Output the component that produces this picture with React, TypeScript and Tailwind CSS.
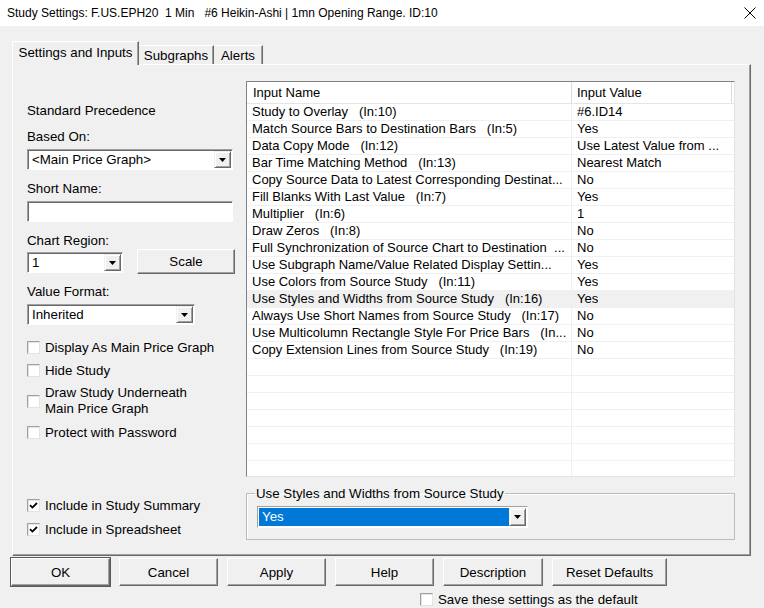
import React from "react";

const rows: [string, string][] = [
  ["Study to Overlay   (In:10)", "#6.ID14"],
  ["Match Source Bars to Destination Bars   (In:5)", "Yes"],
  ["Data Copy Mode   (In:12)", "Use Latest Value from ..."],
  ["Bar Time Matching Method   (In:13)", "Nearest Match"],
  ["Copy Source Data to Latest Corresponding Destinat...", "No"],
  ["Fill Blanks With Last Value   (In:7)", "Yes"],
  ["Multiplier   (In:6)", "1"],
  ["Draw Zeros   (In:8)", "No"],
  ["Full Synchronization of Source Chart to Destination  ...", "No"],
  ["Use Subgraph Name/Value Related Display Settin...", "Yes"],
  ["Use Colors from Source Study   (In:11)", "Yes"],
  ["Use Styles and Widths from Source Study   (In:16)", "Yes"],
  ["Always Use Short Names from Source Study   (In:17)", "No"],
  ["Use Multicolumn Rectangle Style For Price Bars   (In...", "No"],
  ["Copy Extension Lines from Source Study   (In:19)", "No"],
];

function Check({ checked }: { checked?: boolean }) {
  return (
    <span className="w-[13px] h-[13px] shrink-0 bg-white border border-t-[#a0a0a0] border-l-[#a0a0a0] border-r-[#e3e3e3] border-b-[#e3e3e3] shadow-[inset_1px_1px_0_#e3e3e3] flex items-center justify-center">
      {checked && (
        <svg width="9" height="9" viewBox="0 0 9 9">
          <path d="M1 4.2 L3.4 6.6 L8 2" stroke="#000" strokeWidth="1.8" fill="none" />
        </svg>
      )}
    </span>
  );
}

function Arrow() {
  return (
    <svg width="7" height="4" viewBox="0 0 7 4">
      <path d="M0 0 H7 L3.5 4 Z" fill="#000" />
    </svg>
  );
}

function DropBtn() {
  return (
    <div className="w-[17px] h-[17px] my-[1px] mr-[1px] bg-[#f0f0f0] border border-t-[#f0f0f0] border-l-[#f0f0f0] border-r-[#696969] border-b-[#696969] shadow-[inset_1px_1px_0_#ffffff,inset_-1px_-1px_0_#a0a0a0] flex items-center justify-center">
      <Arrow />
    </div>
  );
}

function Select({ value, className }: { value: string; className: string }) {
  return (
    <div
      className={
        "h-[21px] bg-white flex border border-t-[#a0a0a0] border-l-[#a0a0a0] border-r-[#ffffff] border-b-[#ffffff] shadow-[inset_1px_1px_0_#696969] " +
        className
      }
    >
      <div className="flex-1 pl-[4px] pt-[1px] leading-[17px] whitespace-pre">{value}</div>
      <DropBtn />
    </div>
  );
}

function Btn({ label, w, h, def }: { label: string; w: string; h?: string; def?: boolean }) {
  return (
    <div
      className={
        "flex items-center justify-center bg-[#f0f0f0] border border-t-[#ffffff] border-l-[#ffffff] border-r-[#696969] border-b-[#696969] shadow-[inset_-1px_-1px_0_#a0a0a0] " +
        w +
        " " +
        (h ?? "h-[28px]") +
        (def ? " outline outline-1 outline-[#5a5a5a]" : "")
      }
    >
      {label}
    </div>
  );
}

export default function App() {
  const empty = 7;
  return (
    <div className="w-[764px] h-[608px] bg-[#f0f0f0] flex flex-col text-black text-[13.3px] leading-[15px] font-['Liberation_Sans',Arial,sans-serif] overflow-hidden">
      {/* title bar */}
      <div className="h-[26px] shrink-0 bg-white flex items-center pl-[7px] pr-[8px] text-[12px]">
        <span className="flex-1 whitespace-pre">
          Study Settings: F.US.EPH20  1 Min   #6 Heikin-Ashi | 1mn Opening Range. ID:10
        </span>
        <svg width="12" height="12" viewBox="0 0 12 12">
          <path d="M0.5 0.5 L11.5 11.5 M11.5 0.5 L0.5 11.5" stroke="#000" strokeWidth="1" />
        </svg>
      </div>

      {/* tabs */}
      <div className="mt-[15px] ml-[12px] flex items-end h-[23px] shrink-0">
        <div className="relative z-10 w-[127px] h-[24px] -mb-[1px] bg-[#f0f0f0] border-t border-l border-r border-t-white border-l-white border-r-[#696969] shadow-[inset_-1px_0_0_#a0a0a0] flex items-center justify-center pb-[2px]">
          Settings and Inputs
        </div>
        <div className="w-[75px] h-[19px] border-t border-r border-t-white border-r-[#696969] shadow-[inset_-1px_0_0_#a0a0a0] flex items-center justify-center">
          Subgraphs
        </div>
        <div className="w-[49px] h-[19px] border-t border-r border-t-white border-r-[#696969] shadow-[inset_-1px_0_0_#a0a0a0] flex items-center justify-center">
          Alerts
        </div>
      </div>

      {/* panel */}
      <div className="ml-[12px] w-[739px] h-[492px] shrink-0 flex border border-t-white border-l-white border-r-[#696969] border-b-[#696969] shadow-[inset_-1px_-1px_0_#a0a0a0]">
        {/* left column */}
        <div className="w-[210px] ml-[14px] flex flex-col">
          <div className="mt-[38px]">Standard Precedence</div>
          <div className="mt-[11px]">Based On:</div>
          <Select value="<Main Price Graph>" className="mt-[5px] w-[206px]" />
          <div className="mt-[11px]">Short Name:</div>
          <div className="mt-[5px] w-[206px] h-[21px] bg-white border border-t-[#a0a0a0] border-l-[#a0a0a0] border-r-white border-b-white shadow-[inset_1px_1px_0_#696969]" />
          <div className="mt-[11px]">Chart Region:</div>
          <div className="mt-[1px] flex items-start">
            <Select value="1" className="mt-[3px] w-[96px]" />
            <div className="ml-[14px]">
              <Btn label="Scale" w="w-[98px]" h="h-[25px]" />
            </div>
          </div>
          <div className="mt-[10px]">Value Format:</div>
          <Select value="Inherited" className="mt-[5px] w-[168px]" />
          <div className="mt-[15px] flex items-center gap-[5px]">
            <Check />
            <span>Display As Main Price Graph</span>
          </div>
          <div className="mt-[8px] flex items-center gap-[5px]">
            <Check />
            <span>Hide Study</span>
          </div>
          <div className="mt-[7px] flex items-center gap-[5px]">
            <Check />
            <span className="leading-[16px]">
              Draw Study Underneath
              <br />
              Main Price Graph
            </span>
          </div>
          <div className="mt-[8px] flex items-center gap-[5px]">
            <Check />
            <span>Protect with Password</span>
          </div>
          <div className="mt-[58px] flex items-center gap-[5px]">
            <Check checked />
            <span>Include in Study Summary</span>
          </div>
          <div className="mt-[9px] flex items-center gap-[5px]">
            <Check checked />
            <span>Include in Spreadsheet</span>
          </div>
        </div>

        {/* right column */}
        <div className="ml-[9px] w-[489px] flex flex-col">
          <div className="mt-[16px] h-[396px] bg-white border border-t-[#828282] border-l-[#828282] border-r-[#e3e3e3] border-b-[#e3e3e3] flex flex-col overflow-hidden text-[13px]">
            <div className="h-[22px] shrink-0 flex border-b border-[#e5e5e5]">
              <div className="w-[325px] pl-[6px] border-r border-[#dcdcdc] flex items-center">Input Name</div>
              <div className="w-[160px] pl-[5px] border-r border-[#dcdcdc] flex items-center">Input Value</div>
              <div className="flex-1" />
            </div>
            {rows.map(([n, v], i) => (
              <div
                key={i}
                className={
                  "h-[17px] shrink-0 flex border-b border-[#f0f0f0] " + (i === 11 ? "bg-[#f0f0f0]" : "")
                }
              >
                <div className="w-[325px] pl-[5px] border-r border-[#f0f0f0] whitespace-pre overflow-hidden leading-[16px]">
                  {n}
                </div>
                <div className="w-[160px] pl-[5px] whitespace-pre overflow-hidden leading-[16px]">{v}</div>
              </div>
            ))}
            {Array.from({ length: empty }).map((_, i) => (
              <div key={"e" + i} className="h-[17px] shrink-0 flex border-b border-[#f0f0f0]">
                <div className="w-[325px] border-r border-[#f0f0f0]" />
                <div className="w-[160px]" />
              </div>
            ))}
          </div>

          <fieldset className="mt-[9px] h-[54px] border border-[#bcbcbc] shadow-[inset_1px_1px_0_#ffffff] px-[10px]">
            <legend className="ml-[-2px] px-[1px]">Use Styles and Widths from Source Study</legend>
            <div className="mt-[5px] w-[271px] h-[22px] bg-white flex border border-t-[#a0a0a0] border-l-[#a0a0a0] border-r-white border-b-white p-[1px]">
              <div className="flex-1 bg-[#0078d7] text-white pl-[3px] leading-[18px]">Yes</div>
              <div className="w-[17px] h-[18px] bg-[#f0f0f0] border border-t-[#f0f0f0] border-l-[#f0f0f0] border-r-[#696969] border-b-[#696969] shadow-[inset_1px_1px_0_#ffffff,inset_-1px_-1px_0_#a0a0a0] flex items-center justify-center">
                <Arrow />
              </div>
            </div>
          </fieldset>
        </div>
      </div>

      {/* buttons */}
      <div className="mt-[2px] ml-[11px] flex gap-[9px]">
        <Btn label="OK" w="w-[99px]" def />
        <Btn label="Cancel" w="w-[99px]" />
        <Btn label="Apply" w="w-[99px]" />
        <Btn label="Help" w="w-[99px]" />
        <Btn label="Description" w="w-[100px]" />
        <Btn label="Reset Defaults" w="w-[115px]" />
      </div>
      <div className="mt-[6px] ml-[420px] flex items-center gap-[5px]">
        <Check />
        <span>Save these settings as the default</span>
      </div>
    </div>
  );
}
